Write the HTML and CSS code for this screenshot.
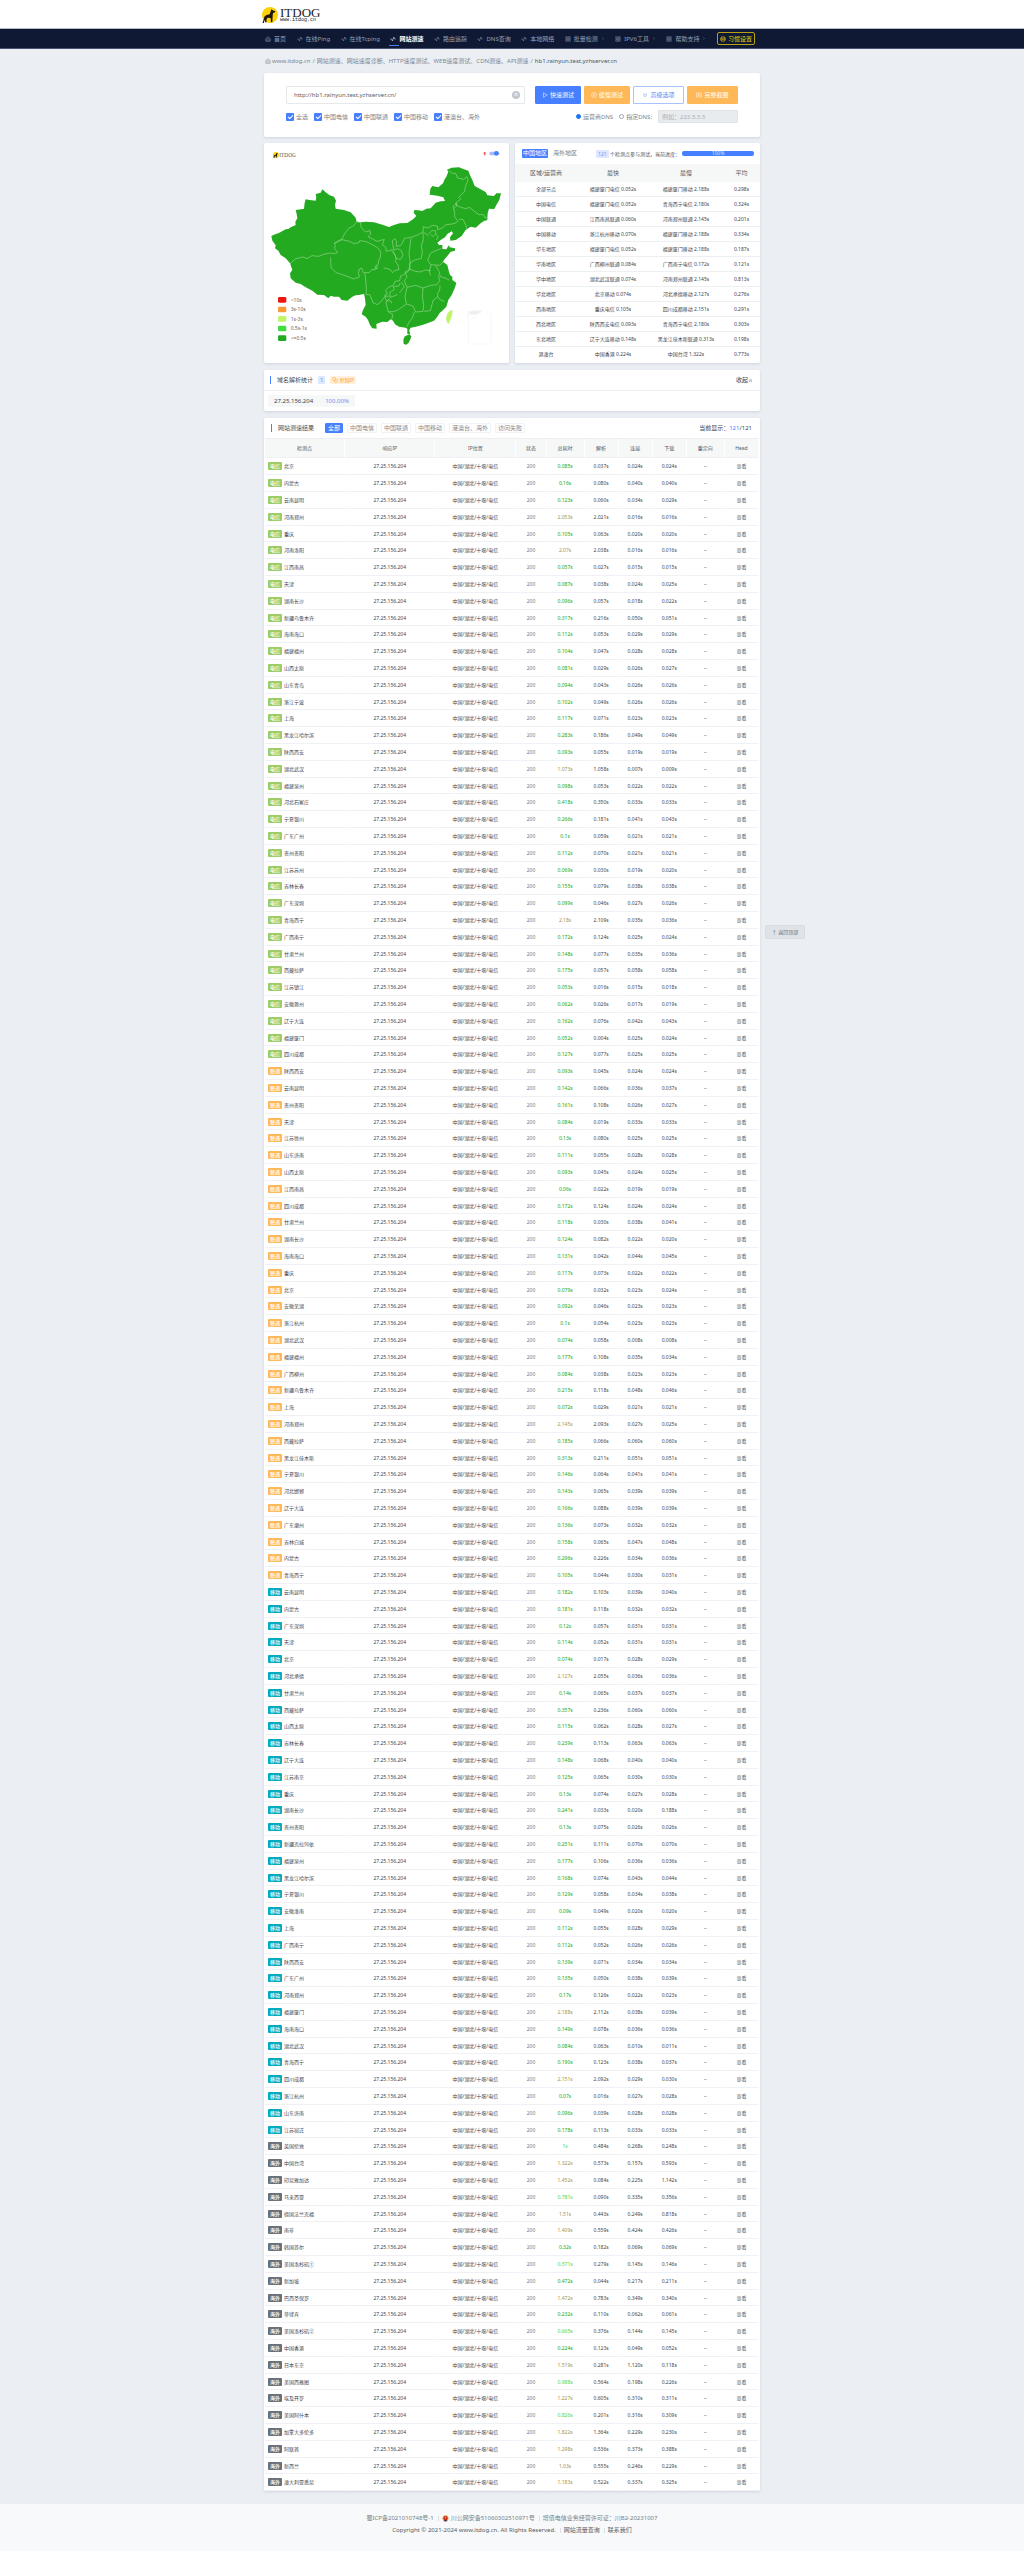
FILE: index.html
```html
<!DOCTYPE html>
<html lang="zh-CN">
<head>
<meta charset="utf-8">
<meta name="viewport" content="width=device-width, initial-scale=1">
<title>网站测速 - ITDOG</title>
<link rel="stylesheet" href="styles.css">
</head>
<body>
<svg class="sprite" aria-hidden="true">
  <symbol id="i-home" viewBox="0 0 24 24"><path d="M3 10 12 3l9 7v11H3zM8 21v-7a4 4 0 0 1 8 0v7"/></symbol>
  <symbol id="i-pulse" viewBox="0 0 24 24"><path d="M1 12h5l4 8 5-16 4 8h4"/></symbol>
  <symbol id="i-grid" viewBox="0 0 24 24"><path d="M3 3h7v7H3zM14 3h7v7h-7zM3 14h7v7H3zM14 14h7v7h-7z"/></symbol>
  <symbol id="i-chev" viewBox="0 0 24 24"><path d="m8 5 7 7-7 7"/></symbol>
  <symbol id="i-globe" viewBox="0 0 24 24"><path d="M12 2a10 10 0 1 0 0 20 10 10 0 0 0 0-20M2 12h20M12 7v10M7 4v16M17 4v16"/></symbol>
  <symbol id="i-play" viewBox="0 0 24 24"><path d="M6 3v18l15-9z"/></symbol>
  <symbol id="i-clock" viewBox="0 0 24 24"><path d="M12 2a10 10 0 1 0 0 20 10 10 0 0 0 0-20M10 8v8l6-4z"/></symbol>
  <symbol id="i-down" viewBox="0 0 24 24"><path d="m5 6 7 6 7-6M5 13l7 6 7-6"/></symbol>
  <symbol id="i-up" viewBox="0 0 24 24"><path d="m5 12 7-6 7 6M5 19l7-6 7 6"/></symbol>
  <symbol id="i-cam" viewBox="0 0 24 24"><path d="M2 4h20v16H2zM12 8a4 4 0 1 0 0 8 4 4 0 0 0 0-8"/></symbol>
  <symbol id="i-copy" viewBox="0 0 24 24"><path d="M3 3h11v11H3zM10 14v7h11V10h-7"/></symbol>
  <symbol id="i-dog" viewBox="0 0 48 48"><circle cx="24" cy="24" r="24" fill="#fdd108"/><path fill="#1c1710" d="M29 6l3 4 8 3-1 3-6 2-1 8-1 20h-4l-1-13-9-1-4 6 1 8h-4l-2-8-3 12H1l4-13 3-9 6-4 9-2 3-9z"/></symbol>
</svg>

<header class="top">
  <div class="wrap">
    <a class="logo" href="#">
      <svg class="logo-mark"><use href="#i-dog"/></svg>
      <span class="logo-text"><b>ITDOG</b><small>www.itdog.cn</small></span>
    </a>
  </div>
</header>

<nav class="nav">
  <div class="wrap nav-list">
    <a href="#"><svg class="ico"><use href="#i-home"/></svg>首页</a>
    <a href="#"><svg class="ico"><use href="#i-pulse"/></svg>在线Ping</a>
    <a href="#"><svg class="ico"><use href="#i-pulse"/></svg>在线Tcping</a>
    <a href="#" class="active"><svg class="ico"><use href="#i-pulse"/></svg>网站测速</a>
    <a href="#"><svg class="ico"><use href="#i-pulse"/></svg>路由追踪</a>
    <a href="#"><svg class="ico"><use href="#i-pulse"/></svg>DNS查询</a>
    <a href="#"><svg class="ico"><use href="#i-pulse"/></svg>本地网络</a>
    <a href="#"><svg class="ico"><use href="#i-grid"/></svg>批量检测<svg class="ico chev"><use href="#i-chev"/></svg></a>
    <a href="#"><svg class="ico"><use href="#i-grid"/></svg>IPV6工具<svg class="ico chev"><use href="#i-chev"/></svg></a>
    <a href="#"><svg class="ico"><use href="#i-grid"/></svg>帮助支持<svg class="ico chev"><use href="#i-chev"/></svg></a>
    <a href="#" class="setting"><svg class="ico"><use href="#i-globe"/></svg>习惯设置</a>
  </div>
</nav>

<main class="wrap">
  <div class="crumbs">
    <a href="#"><svg class="ico"><use href="#i-home"/></svg>www.itdog.cn</a><span>/</span>
    <span>网站测速、网站速度诊断、HTTP速度测试、WEB速度测试、CDN测速、API测速</span><span>/</span>
    <span class="here">hb1.rainyun.test.yzhserver.cn</span>
  </div>

  <form class="card search">
    <div class="line">
      <div class="url">
        <input type="text" aria-label="网址" value="http://hb1.rainyun.test.yzhserver.cn/">
        <button type="button" class="clear" aria-label="清空">×</button>
      </div>
      <button type="button" class="btn blue"><svg class="ico"><use href="#i-play"/></svg>快速测试</button>
      <button type="button" class="btn orange"><svg class="ico"><use href="#i-clock"/></svg>缓慢测试</button>
      <button type="button" class="btn outline"><svg class="ico"><use href="#i-down"/></svg>高级选项</button>
      <button type="button" class="btn orange wide"><svg class="ico"><use href="#i-cam"/></svg>完整截图</button>
    </div>
    <div class="line options">
      <label><input type="checkbox" checked>全选</label>
      <label><input type="checkbox" checked>中国电信</label>
      <label><input type="checkbox" checked>中国联通</label>
      <label><input type="checkbox" checked>中国移动</label>
      <label><input type="checkbox" checked>港澳台、海外</label>
      <span class="grow"></span>
      <label><input type="radio" name="dns" checked>运营商DNS</label>
      <label><input type="radio" name="dns">指定DNS:</label>
      <input type="text" class="dns" aria-label="指定DNS" placeholder="例如：223.5.5.5" disabled>
    </div>
  </form>

  <div class="pair">
    <section class="card map">
      <svg viewBox="25 39 735 660" role="img" aria-label="中国各省访问速度">
        <use href="#i-dog" x="52" y="66" width="18" height="18"/>
        <text class="m-logo" x="71" y="80">ITDOG</text>
        <circle cx="687" cy="70" r="4" fill="#f7a3a3"/><rect x="685" y="66" width="4" height="10" fill="#e66"/>
        <rect x="701" y="65" width="30" height="11" rx="5" fill="#a3bffa"/><circle cx="722" cy="70" r="7" fill="#467fff"/>
        <g class="land">
          <path d="M47 318L60 312 68 310 75 306 90 298 98 297 105 292 120 285 119 275 125 265 123 252 120 240 136 238 145 236 147 218 150 208 162 210 180 212 182 202 180 192 195 188 200 178 210 187 222 196 235 200 241 212 238 224 240 236 265 240 285 247 300 263 303 275 315 277 330 275 355 277 380 284 400 291 415 285 432 280 455 279 472 268 482 258 474 248 476 240 488 241 500 243 512 236 525 235 540 218 555 214 568 213 563 202 545 197 522 194 524 176 530 168 548 172 562 160 567 148 572 140 578 125 574 119 588 113 610 112 625 118 638 122 644 138 650 150 657 168 675 178 690 186 695 196 715 198 722 190 736 190 731 210 722 225 716 237 700 236 696 250 695 270 685 273 675 280 660 293 645 290 630 300 618 318 600 330 584 332 583 322 592 310 588 304 575 312 568 322 555 330 545 338 550 345 560 345 560 357 572 358 580 345 582 352 598 355 598 362 585 365 575 378 565 390 562 395 575 405 580 425 583 435 590 440 590 450 602 458 600 466 597 475 588 495 578 510 572 530 560 542 552 549 545 560 535 572 515 580 500 585 480 590 465 593 461 600 463 613 455 612 455 596 450 593 430 590 418 583 412 572 405 568 395 576 380 575 362 582 363 596 350 595 343 585 337 570 330 560 318 553 322 540 330 525 328 505 325 492 310 495 300 496 290 500 275 512 258 510 250 500 235 500 225 497 218 505 205 495 185 494 170 482 150 472 135 462 120 458 105 445 103 430 110 420 103 400 90 385 75 375 68 362 58 355 60 346 50 332z"/>
          <path d="M443 630l3-10 8-4 7-3 6 6-3 9-5 10-7 6-8-2z"/>
        </g>
        <path class="tw" d="M587 539l4 4-2 13-5 13-5 13-5-5-3-13 5-15z"/>
        <g class="prov">
          <path d="M303 275l-9 12-15 8-12 16-8 16-23 12 3 8-3 8 10 12-10 4-12-2-20 4-15 6-20-2-15 9-12-5-22 5-8 7-9 8"/>
          <path d="M236 340l23-11 22 5 15 7 14-3 2-6 20 3 20 10 14 8 9 12-1 16-6 12 0 10-8 5-3 12-8-2-8 10-18 0-5-14-7 3-3 14 4 9-18 7-22-9-30-10-15-13-2-18 0-14"/>
          <path d="M303 275l12 3 1 14 13 14 14-4 2 10-8 8 14 7 13 7 22-6-6 16 10 8 2 12 18-5 6 12 5 12-1 12 7 10 3 14-12 2-8 7-3-6-10-6-13-2"/>
          <path d="M412 348l-2-16 8-6 5 10-2 13 13-2 6-8 6-14 20-3 22-8 14-8 1-16 14 4 14-8 14 2 1 11 15-6 10-9 18-2 13-4 5-5-10-12 0-12-5-20 12-10"/>
          <path d="M412 348l3 12 10-4 12 6 5 14-7 12-12-2-7-14-8-8M362 404l3 6-6 7 8-3M328 430l2 20 2 20-1 24 12 0 9 24 13 6 12-10 7-10 6-6 14 1-2-12 14-8-3-9 16-2 5-9"/>
          <path d="M466 325l-3 20-3 25 4 30-4 18-2 6-14 10-9 4-3 14-14 2-5 12-15 6-8 10 5 10-8 4 5 16 14 1 2 7M461 400l16-10 20-5 3-20-3-18 6-18-1-22"/>
          <path d="M461 400l2 18 16 6 14 2 16-6 16 2M518 312l10-10 12 0 0 10 8 8-6 10M524 312l8 8 8-8"/>
          <path d="M503 306l16 12M516 392l8-22 16-8 16-6M516 392l10 12 26 2 10-10M526 404l-5 20 4 12M540 406l10 18 4 16 14 4 12 6M463 418l-15 8 6 16-8 10 8 20"/>
          <path d="M454 472l26-6 22 8 24-8 18-2 8-12-4-16M454 472l-6 26 4 24 20 6 8 18 22-2 2-20-4-24 2-26M553 466l-1 14-6 10 0 10 8 10 12 4M546 500l-14 12-8 30-18 2M476 546l-6 18-10 12-6 14M400 545l14 0 14-6 24-17"/>
          <path d="M408 568l4-14-14-8-7-30 14-14 20-8M437 456l9 14-14 18"/>
          <path d="M580 122l10 8 10 0 6 14 18 4 10-8 3 10-8 20-2 14-10 10-8 8 6 6-14 10 2 10-8 8M598 220l12 10 20 6 12-4 14 12 14 10 14 0 4 10 8-4M610 268l12 0 8 16 4 14"/>
        </g>
        <g class="inset"><path d="M638 545v97h68v-97"/><path class="faint" d="M640 544l38-2-4 6-16 6-16-2zM652 562l4-2-2 6zM680 575l4 6M655 590l3-4M675 612l4-4M695 548l3 8"/></g>
        <g class="legend">
          <rect x="67" y="501" width="25" height="17" rx="4" fill="#e91912"/><text x="105" y="515">&gt;10s</text>
          <rect x="67" y="530" width="25" height="17" rx="4" fill="#f99a38"/><text x="105" y="543">3s-10s</text>
          <rect x="67" y="558" width="25" height="17" rx="4" fill="#bff567"/><text x="105" y="572">1s-3s</text>
          <rect x="67" y="587" width="25" height="17" rx="4" fill="#42dd40"/><text x="105" y="601">0.5s-1s</text>
          <rect x="67" y="616" width="25" height="17" rx="4" fill="#22aa22"/><text x="105" y="629">&lt;=0.5s</text>
        </g>
      </svg>
    </section>

    <section class="card area">
      <div class="area-head">
        <button type="button" class="tab on">中国地区</button>
        <button type="button" class="tab">海外地区</button>
        <span class="count"><b>121</b> 个检测点参与测试，当前进度：</span>
        <div class="progress" role="progressbar" aria-valuenow="100">100%</div>
      </div>
      <table class="region">
        <colgroup><col class="r1"><col class="r2"><col class="r3"><col class="r4"></colgroup>
        <thead><tr><th>区域/运营商</th><th>最快</th><th>最慢</th><th>平均</th></tr></thead>
        <tbody>
          <tr><td>全部节点</td><td>福建厦门电信 0.052s</td><td>福建厦门移动 2.188s</td><td>0.298s</td></tr>
          <tr><td>中国电信</td><td>福建厦门电信 0.052s</td><td>青海西宁电信 2.180s</td><td>0.324s</td></tr>
          <tr><td>中国联通</td><td>江西南昌联通 0.060s</td><td>河南郑州联通 2.145s</td><td>0.201s</td></tr>
          <tr><td>中国移动</td><td>浙江杭州移动 0.070s</td><td>福建厦门移动 2.188s</td><td>0.334s</td></tr>
          <tr><td>华东地区</td><td>福建厦门电信 0.052s</td><td>福建厦门移动 2.188s</td><td>0.187s</td></tr>
          <tr><td>华南地区</td><td>广西柳州联通 0.084s</td><td>广西南宁电信 0.172s</td><td>0.121s</td></tr>
          <tr><td>华中地区</td><td>湖北武汉联通 0.074s</td><td>河南郑州联通 2.145s</td><td>0.813s</td></tr>
          <tr><td>华北地区</td><td>北京移动 0.074s</td><td>河北承德移动 2.127s</td><td>0.276s</td></tr>
          <tr><td>西南地区</td><td>重庆电信 0.105s</td><td>四川成都移动 2.151s</td><td>0.291s</td></tr>
          <tr><td>西北地区</td><td>陕西西安电信 0.093s</td><td>青海西宁电信 2.180s</td><td>0.303s</td></tr>
          <tr><td>东北地区</td><td>辽宁大连移动 0.148s</td><td>黑龙江佳木斯联通 0.313s</td><td>0.198s</td></tr>
          <tr><td>港澳台</td><td>中国香港 0.224s</td><td>中国台湾 1.322s</td><td>0.773s</td></tr>
        </tbody>
      </table>
    </section>
  </div>

  <section class="card stats">
    <div class="head">
      <h2>域名解析统计</h2><span class="num">1</span>
      <button type="button" class="copy"><svg class="ico"><use href="#i-copy"/></svg>复制IP</button>
      <span class="grow"></span>
      <a href="#" class="fold">收起<svg class="ico"><use href="#i-up"/></svg></a>
    </div>
    <div class="ips"><p class="ip"><span>27.25.156.204</span><span class="pct">100.00%</span></p></div>
  </section>

  <section class="card results">
    <div class="head">
      <h2>网站测速结果</h2>
      <button type="button" class="filter on">全部</button>
      <button type="button" class="filter">中国电信</button>
      <button type="button" class="filter">中国联通</button>
      <button type="button" class="filter">中国移动</button>
      <button type="button" class="filter">港澳台、海外</button>
      <button type="button" class="filter">访问失败</button>
      <span class="grow"></span>
      <span class="shown">当前显示：<b>121</b>/121</span>
    </div>
    <table class="list">
      <colgroup><col class="c-node"><col class="c-ip"><col class="c-loc"><col class="c-code"><col class="c-total"><col class="c-t"><col class="c-t"><col class="c-t"><col class="c-total"><col class="c-t"></colgroup>
      <thead><tr><th>检测点</th><th>响应IP</th><th>IP位置</th><th>状态</th><th>总耗时</th><th>解析</th><th>连接</th><th>下载</th><th>重定向</th><th>Head</th></tr></thead>
      <tbody id="rows"></tbody>
    </table>
  </section>
</main>

<footer class="foot">
  <p><a href="#">蜀ICP备2021010748号-1</a><a href="#"><svg class="badge" viewBox="0 0 20 20"><path fill="#e8a33a" d="M4 2l6-1 6 1 3 8-4 8-5 2-5-2-4-8z"/><circle cx="10" cy="9" r="6" fill="#c9291c"/><path fill="#3f4a76" d="M5 14h10l-2 4H7z"/><circle cx="10" cy="8" r="2" fill="#f6c945"/></svg>川公网安备51060302510971号</a><a href="#">增值电信业务经营许可证：川B2-20231007</a></p>
  <p class="dark"><span>Copyright © 2021-2024 www.itdog.cn. All Rights Reserved.</span><a href="#">网站流量查询</a><a href="#">联系我们</a></p>
</footer>

<button type="button" class="to-top">↑ 返回顶部</button>
<script src="script.js"></script>
</body>
</html>
```
FILE: styles.css
```css
* { box-sizing: border-box; }

body {
  margin: 0;
  background: #ebeff4;
  color: #3f444b;
  font: 5px/8px "Noto Sans", "Noto Sans CJK SC", sans-serif;
}

a { color: inherit; text-decoration: none; }
p, h2 { margin: 0; }
button, input { font: inherit; color: inherit; margin: 0; }
button { cursor: pointer; border: 0; background: none; padding: 0; }

.sprite { position: absolute; width: 0; height: 0; }
.wrap { max-width: 496px; margin: 0 auto; }
.grow { flex: 1; }

.ico {
  width: 6px;
  height: 6px;
  flex: none;
  fill: none;
  stroke: currentColor;
  stroke-width: 2;
}

/* header */
.top { background: #fff; height: 28px; }
.logo { display: inline-flex; align-items: center; gap: 2px; padding-top: 7px; margin-left: -2px; color: #222; }
.logo-mark { width: 16px; height: 16px; }
.logo-text { display: flex; flex-direction: column; }
.logo-text b { font: 13px/11px "Liberation Serif", serif; }
.logo-text small { font: 5px/5px "Liberation Mono", monospace; }

.nav { background: #101933; border-top: 1px solid #b4bdc4; border-bottom: 1px solid #4a5273; }
.nav-list { display: flex; justify-content: space-between; align-items: center; height: 19px; padding: 0 5px 0 1px; font-size: 6px; color: #94a0b6; }
.nav-list a { display: flex; align-items: center; gap: 3px; white-space: nowrap; }
.nav-list .chev { width: 4px; height: 5px; }
.nav-list .active { position: relative; color: #fff; font-weight: 700; }
.nav-list .active::after { content: ""; position: absolute; left: -1px; bottom: -3px; width: 10px; height: 1px; background: #467fff; }
.nav-list .setting { color: #f7cf09; border: 1px solid #b99f14; border-radius: 2px; padding: 1px 2px; height: 13px; gap: 2px; }

.crumbs { display: flex; align-items: center; gap: 2px; height: 24px; padding-left: 1px; font-size: 6px; color: #7c8692; white-space: nowrap; }
.crumbs a { display: flex; align-items: center; gap: 1px; }
.crumbs .here { color: #4f565e; }

.card { background: #fff; border-radius: 2px; box-shadow: 0 1px 3px rgba(60, 80, 110, .16); margin-bottom: 6px; }

/* search form */
.search { padding: 13px 22px; height: 64px; }
.line { display: flex; align-items: center; gap: 3px; }
.url { flex: 1; position: relative; margin-right: 7px; }
.url input { display: block; width: 100%; height: 18px; border: 1px solid #e6e9ec; border-radius: 1px; padding: 0 20px 0 7px; font-size: 6px; color: #5a626b; background: #fff; }
.clear { position: absolute; right: 5px; top: 5px; width: 8px; height: 8px; border-radius: 50%; background: #c4c8cc; color: #fff; font-size: 7px; line-height: 8px; }
.btn { display: flex; align-items: center; justify-content: center; gap: 2px; width: 46px; height: 18px; border: 1px solid; border-radius: 1px; font-size: 6px; color: #fff; white-space: nowrap; }
.blue { background: #467fff; border-color: #467fff; }
.orange { background: #ffb858; border-color: #ffb858; }
.outline { width: 51px; border-color: #a9c3ff; color: #5c88f5; }
.wide { width: 51px; }

.options { margin-top: 6px; font-size: 6px; color: #7b838c; height: 13px; }
.options label { display: flex; align-items: center; gap: 2px; margin-right: 3px; white-space: nowrap; }
.options input[type="checkbox"] { appearance: none; width: 8px; height: 8px; border-radius: 1px; background: #467fff; display: grid; place-items: center; }
.options input[type="checkbox"]::after { content: ""; width: 4px; height: 2px; border-left: 1px solid #fff; border-bottom: 1px solid #fff; transform: rotate(-45deg); }
.options input[type="radio"] { appearance: none; width: 5px; height: 5px; border: 1px solid #a0a6ad; border-radius: 50%; }
.options input[type="radio"]:checked { border-color: #1677f0; background: #1677f0; }
.dns { width: 80px; height: 13px; border: 1px solid #dfe3e6; border-radius: 1px; background: #e9ecef; padding: 0 3px; }
.dns::placeholder { color: #a9b0b7; }

/* map and regions */
.pair { display: grid; grid-template-columns: 1fr 1fr; gap: 6px; margin-bottom: 7px; }
.pair .card { margin: 0; }
.map svg { display: block; width: 100%; height: auto; }
.land { fill: #24aa20; }
.tw { fill: #bff567; }
.prov { fill: none; stroke: #92d58c; stroke-width: 2; stroke-linejoin: round; }
.inset { fill: none; stroke: #f3f3f3; stroke-width: 2; }
.faint { fill: #eee; }
.legend text { font-size: 15px; fill: #666; }
.m-logo { font: 16px "Liberation Serif", serif; fill: #555; }

.area { overflow: hidden; }
.area-head { display: flex; align-items: center; height: 21px; padding: 0 6px 0 7px; white-space: nowrap; }
.tab { height: 9px; padding: 0 1px; font-size: 6px; line-height: 9px; color: #767e86; border-radius: 1px; margin-right: 4px; }
.tab.on { background: #467fff; color: #fff; }
.count { margin-left: auto; margin-right: 2px; color: #555; }
.count b { display: inline-block; background: #dde7ff; color: #6f97fb; font-weight: 400; border-radius: 1px; padding: 0 2px; }
.progress { width: 72px; height: 5px; border-radius: 2px; background: #467fff; color: #dbe6ff; line-height: 5px; text-align: center; }

table { width: 100%; table-layout: fixed; border-collapse: separate; border-spacing: 0; text-align: center; white-space: nowrap; }
th, td { padding: 0; }
th { background: #f6f7f7; color: #555b62; font-weight: 400; }

.region th { line-height: 18px; font-size: 6px; }
.region td { line-height: 14px; border-bottom: 1px solid #eeeff1; }
.region tr:last-child td { border-color: #fff; }
.r1 { width: 62px; }
.r2 { width: 72px; }
.r3 { width: 74px; }
.r4 { width: 37px; }

/* section headings */
.head { display: flex; align-items: center; height: 21px; padding: 0 7px 0 6px; border-bottom: 1px solid #eceef2; font-size: 6px; white-space: nowrap; }
.head h2 { border-left: 1px solid #467fff; padding-left: 6px; font-size: 6px; line-height: 8px; font-weight: 400; color: #454b53; }
.num, .copy { border-radius: 1px; padding: 0 2px; line-height: 8px; }
.num { margin: 0 5px; background: #dde7ff; color: #5d8afc; }
.copy { display: flex; align-items: center; gap: 1px; background: #fff0dc; color: #ffa02e; font-size: 5px; }
.fold { display: flex; align-items: center; }
.fold .ico { width: 5px; height: 5px; }
.ips { padding: 4px; height: 20px; }
.ip { display: inline-flex; gap: 12px; padding: 0 6px; line-height: 12px; font-size: 6px; background: #f6f7f7; border-radius: 1px; }
.pct { color: #7590f2; }
.stats { margin-bottom: 7px; }

.filter { height: 10px; padding: 0 2px; border: 1px solid #f1f2f4; border-radius: 1px; font-size: 6px; line-height: 8px; color: #838b93; margin-right: 4px; }
.filter.on { background: #467fff; border-color: #467fff; color: #fff; margin-left: 11px; }
.shown b { color: #467fff; font-weight: 400; }

/* results */
.results { padding: 0 1px; margin-bottom: 13px; }
.c-node { width: 80px; }
.c-ip { width: 90px; }
.c-loc { width: 81px; }
.c-code { width: 30px; }
.c-total { width: 38px; }
.c-t { width: 34px; }
.list th, .list td { border-right: 1px solid #fff; border-bottom: 1px solid #f0f1f6; }
.list th { line-height: 18px; }
.list td { height: 17px; line-height: 8px; }
.list tr:nth-child(5n) td { height: 16px; }
.list td:first-child { text-align: left; padding-left: 3px; }
.list td:nth-child(4) { color: #73787e; }
.tag { display: inline-block; min-width: 14px; padding: 0 2px; border-radius: 1px; color: #fff; font-weight: 500; text-align: center; margin-right: 2px; }
.ct { background: #9ccc65; }
.cu { background: #ffb858; }
.cm { background: #00abc0; }
.os { background: #68717b; }
.fast { color: #14a814; }
.mid { color: #48d848; }
.slow { color: #a09350; }
.list td a { color: #566371; }

.foot { background: #f8f9fa; padding: 8px 0 20px; font-size: 6px; line-height: 12px; text-align: center; color: #767e86; }
.foot p { display: flex; justify-content: center; }
.foot p > * { display: flex; align-items: center; gap: 2px; padding: 0 4px; }
.foot p > * + * { background: linear-gradient(#dcdfe2, #dcdfe2) left / 1px 5px no-repeat; }
.foot .dark { color: #565c63; }
.badge { width: 7px; height: 7px; }

.to-top { position: fixed; left: calc(50% + 253px); top: 925px; width: 40px; height: 14px; background: #dfe3e7; border: 1px solid #d9dde2; border-radius: 1px; font-size: 5px; color: #69717a; white-space: nowrap; }
```
FILE: script.js
```js
// One line per node: name, total, DNS lookup, connect, download (seconds).
const groups = [
  ['ct', '电信', `北京 0.085 0.037 0.024 0.024
内蒙古 0.16 0.080 0.040 0.040
云南昆明 0.123 0.060 0.034 0.029
河南郑州 2.053 2.021 0.016 0.016
重庆 0.105 0.063 0.020 0.020
河南洛阳 2.07 2.038 0.016 0.016
江西南昌 0.057 0.027 0.015 0.015
天津 0.087 0.038 0.024 0.025
湖南长沙 0.096 0.057 0.018 0.022
新疆乌鲁木齐 0.317 0.216 0.050 0.051
海南海口 0.112 0.053 0.029 0.029
福建福州 0.104 0.047 0.028 0.028
山西太原 0.081 0.029 0.026 0.027
山东青岛 0.094 0.043 0.026 0.026
浙江宁波 0.102 0.049 0.026 0.026
上海 0.117 0.071 0.023 0.023
黑龙江哈尔滨 0.283 0.186 0.049 0.049
陕西西安 0.093 0.055 0.019 0.019
湖北武汉 1.073 1.058 0.007 0.009
福建泉州 0.098 0.053 0.022 0.022
河北石家庄 0.418 0.350 0.033 0.033
宁夏银川 0.266 0.181 0.041 0.043
广东广州 0.1 0.059 0.021 0.021
贵州贵阳 0.112 0.070 0.021 0.021
江苏苏州 0.069 0.030 0.019 0.020
吉林长春 0.155 0.079 0.038 0.038
广东深圳 0.099 0.046 0.027 0.026
青海西宁 2.18 2.109 0.035 0.036
广西南宁 0.172 0.124 0.025 0.024
甘肃兰州 0.148 0.077 0.035 0.036
西藏拉萨 0.175 0.057 0.058 0.058
江苏镇江 0.053 0.016 0.015 0.018
安徽滁州 0.062 0.026 0.017 0.019
辽宁大连 0.162 0.076 0.042 0.043
福建厦门 0.052 0.004 0.025 0.024
四川成都 0.127 0.077 0.025 0.025`],
  ['cu', '联通', `陕西西安 0.093 0.045 0.024 0.024
云南昆明 0.142 0.066 0.036 0.037
贵州贵阳 0.161 0.108 0.026 0.027
天津 0.084 0.019 0.033 0.033
江苏徐州 0.13 0.080 0.025 0.025
山东济南 0.111 0.055 0.028 0.028
山西太原 0.093 0.045 0.024 0.025
江西南昌 0.06 0.022 0.019 0.019
四川成都 0.172 0.124 0.024 0.024
甘肃兰州 0.118 0.030 0.038 0.041
湖南长沙 0.124 0.082 0.022 0.020
海南海口 0.131 0.042 0.044 0.045
重庆 0.117 0.073 0.022 0.022
北京 0.079 0.032 0.023 0.024
安徽芜湖 0.092 0.046 0.023 0.023
浙江杭州 0.1 0.054 0.023 0.023
湖北武汉 0.074 0.058 0.008 0.008
福建福州 0.177 0.108 0.035 0.034
广西柳州 0.084 0.038 0.023 0.023
新疆乌鲁木齐 0.215 0.118 0.048 0.046
上海 0.072 0.029 0.021 0.021
河南郑州 2.145 2.093 0.027 0.025
西藏拉萨 0.185 0.066 0.060 0.060
黑龙江佳木斯 0.313 0.211 0.051 0.051
宁夏银川 0.146 0.064 0.041 0.041
河北邯郸 0.143 0.065 0.039 0.039
辽宁大连 0.166 0.088 0.039 0.039
广东潮州 0.136 0.073 0.032 0.032
吉林白城 0.158 0.065 0.047 0.048
内蒙古 0.296 0.226 0.034 0.036
青海西宁 0.105 0.044 0.030 0.031`],
  ['cm', '移动', `云南昆明 0.182 0.103 0.039 0.040
内蒙古 0.181 0.118 0.032 0.032
广东深圳 0.12 0.057 0.031 0.031
天津 0.114 0.052 0.031 0.031
北京 0.074 0.017 0.028 0.029
河北承德 2.127 2.055 0.036 0.036
甘肃兰州 0.14 0.065 0.037 0.037
西藏拉萨 0.357 0.236 0.060 0.060
山西太原 0.115 0.062 0.028 0.027
吉林长春 0.239 0.113 0.063 0.063
辽宁大连 0.148 0.068 0.040 0.040
江苏南京 0.125 0.065 0.030 0.030
重庆 0.13 0.074 0.027 0.028
湖南长沙 0.241 0.033 0.020 0.188
贵州贵阳 0.13 0.075 0.026 0.026
新疆克拉玛依 0.251 0.111 0.070 0.070
福建泉州 0.177 0.106 0.036 0.036
黑龙江哈尔滨 0.168 0.074 0.043 0.044
宁夏银川 0.129 0.058 0.034 0.038
安徽淮南 0.09 0.049 0.020 0.020
上海 0.112 0.055 0.028 0.029
广西南宁 0.112 0.052 0.026 0.026
陕西西安 0.139 0.071 0.034 0.034
广东广州 0.135 0.050 0.038 0.039
河南郑州 0.17 0.126 0.022 0.023
福建厦门 2.188 2.112 0.038 0.039
海南海口 0.149 0.078 0.036 0.036
湖北武汉 0.084 0.063 0.010 0.011
青海西宁 0.190 0.123 0.038 0.037
四川成都 2.151 2.092 0.029 0.030
浙江杭州 0.07 0.016 0.027 0.028
山东济南 0.096 0.039 0.028 0.028
江苏宿迁 0.178 0.113 0.033 0.033`],
  ['os', '海外', `英国伦敦 1 0.484 0.268 0.248
中国台湾 1.322 0.573 0.157 0.593
印尼雅加达 1.452 0.084 0.225 1.142
马来西亚 0.781 0.090 0.335 0.356
德国法兰克福 1.51 0.443 0.249 0.818
南非 1.409 0.559 0.424 0.426
韩国首尔 0.32 0.182 0.069 0.069
美国洛杉矶① 0.571 0.279 0.145 0.146
新加坡 0.472 0.044 0.217 0.211
巴西圣保罗 1.472 0.783 0.349 0.340
菲律宾 0.232 0.110 0.062 0.061
美国洛杉矶② 0.665 0.376 0.144 0.145
中国香港 0.224 0.123 0.049 0.052
日本东京 1.519 0.281 1.120 0.118
美国西雅图 0.988 0.564 0.198 0.226
埃及开罗 1.227 0.605 0.310 0.311
美国阿什本 0.826 0.201 0.316 0.309
加拿大多伦多 1.822 1.364 0.229 0.230
阿联酋 1.298 0.536 0.373 0.388
新西兰 1.03 0.555 0.246 0.229
澳大利亚悉尼 1.183 0.522 0.337 0.325`],
];

const speed = t => (t > 1 ? 'slow' : t > 0.5 ? 'mid' : 'fast');

document.getElementById('rows').innerHTML = groups.map(([cls, label, text]) =>
  text.split('\n').map(line => {
    const [name, total, dns, connect, download] = line.split(' ');
    return `<tr><td><span class="tag ${cls}">${label}</span>${name}</td><td>27.25.156.204</td>` +
      `<td>中国/湖北/十堰/电信</td><td>200</td><td class="${speed(Number(total))}">${total}s</td>` +
      `<td>${dns}s</td><td>${connect}s</td><td>${download}s</td><td>--</td><td><a href="#">查看</a></td></tr>`;
  }).join('')).join('');
```
